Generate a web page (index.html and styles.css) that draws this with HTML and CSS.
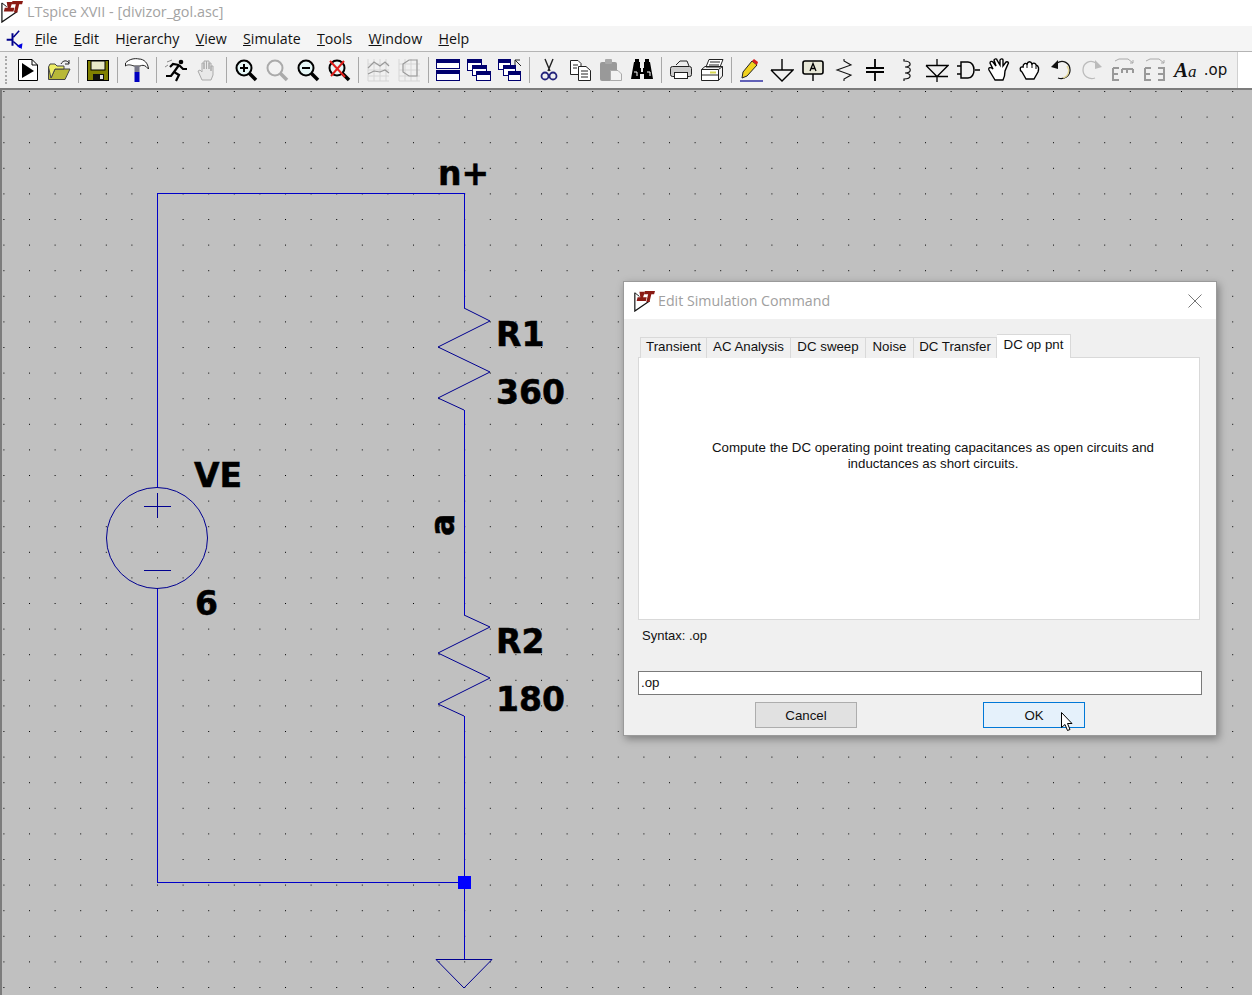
FILE: index.html
```html
<!DOCTYPE html>
<html lang="en">
<head>
    <meta charset="UTF-8">
    <title>LTspice XVII - [divizor_gol.asc]</title>
    <link rel="stylesheet" href="styles.css">
</head>
<body>

    <!-- app logo -->
    <svg width="0" height="0" class="defs">
        <symbol id="lt-logo" viewBox="0 0 24 24">
            <path d="M2 3 V23 L18 12" fill="none" stroke="#111" stroke-width="1.300"/>
            <path d="M2 3 L7 7" fill="none" stroke="#111"/>
            <path d="M7 2 H13 L11 8 H15 L14 12 H4 L5 8 H8 Z" fill="#8a1a14"/>
            <path d="M13 1 H24 L23 4.500 H20 L18 13 H14.500 L16.500 4.500 H12 Z" fill="#8a1a14"/>
        </symbol>
        <symbol id="glass" viewBox="0 0 24 24">
            <path d="M15 15 L22 22" stroke="#000" stroke-width="3.6" fill="none"/>
            <circle cx="10" cy="10" r="7.5" fill="#e6f7f7" stroke="#000" stroke-width="2"/>
        </symbol>
    </svg>

    <div class="titlebar">
        <svg class="title-logo"><use href="#lt-logo"/></svg>
        <span class="title-text">LTspice XVII - [divizor_gol.asc]</span>
    </div>

    <div class="menubar">
        <svg class="menu-icon" viewBox="0 0 24 24">
            <path d="M2 13 H9 M9 5 V20" stroke="#00008b" stroke-width="2.4" fill="none"/>
            <path d="M10 10 L17 2 M10 15 L18 22" stroke="#00008b" stroke-width="1.8" fill="none"/>
            <path d="M14 20 L21 17 L20 24 Z" fill="#0000e0"/>
        </svg>
        <nav class="menu">
            <span><u>F</u>ile</span>
            <span><u>E</u>dit</span>
            <span>H<u>i</u>erarchy</span>
            <span><u>V</u>iew</span>
            <span><u>S</u>imulate</span>
            <span><u>T</u>ools</span>
            <span><u>W</u>indow</span>
            <span><u>H</u>elp</span>
        </nav>
    </div>

    <div class="toolbar-row">
        <div class="toolbar">
            <span class="grip"></span>

            <svg class="ico" viewBox="0 0 24 24"><path d="M2.5 1.500 H16 L21.500 7 V22.500 H2.500 Z" fill="#fff" stroke="#000"/><path d="M16 1.500 V7 H21.500" fill="none" stroke="#000"/><path d="M6 5 L18 13 L6 20 Z" fill="#000"/></svg>
            <svg class="ico" viewBox="0 0 24 24"><path d="M1.500 9 V21.500 H18 L23 11 H8 L4 20" fill="#b8b838" stroke="#444"/><path d="M1.500 9 L3 6 H8 L10 8 H17 V11 H8 L4 20 Z" fill="#eeee66" stroke="#444"/><path d="M14 6 C16 2 20 2 22 5 M22 2 V6 H18" fill="none" stroke="#222"/></svg>
            <span class="sep"></span>
            <svg class="ico" viewBox="0 0 24 24"><rect x="1.500" y="2.500" width="21" height="20" fill="#808000" stroke="#000"/><rect x="5" y="3" width="14" height="9" fill="#e8e8c8" stroke="#000"/><rect x="7" y="16" width="11" height="6" fill="#111"/><rect x="14" y="17" width="3" height="4" fill="#ddd"/></svg>
            <span class="sep"></span>
            <svg class="ico" viewBox="0 0 24 24"><path d="M0.500 5 C4 1 10 0 14 1 C19 1 23 5 23.500 11 L21 8.500 C19 7 17 7 15 8 H9 C6 7 3 6 0.500 8 Z" fill="#fff" stroke="#222"/><rect x="9.500" y="8" width="5" height="6" fill="#777788"/><rect x="9.500" y="14" width="5" height="10" fill="#0000c0"/></svg>
            <span class="sep"></span>
            <svg class="ico" viewBox="0 0 24 24"><circle cx="17" cy="4" r="2.300"/><path d="M15 7 L10 14 L15 17 L12 23 M10 14 L7 18 H2 M15 7 L19 11 H23 M15 7 L9 6 L6 9" fill="none" stroke="#000" stroke-width="2.200"/><path d="M3 4 L8 2 M1 9 L4 7" stroke="#888" fill="none"/></svg>
            <svg class="ico" viewBox="0 0 24 24"><path d="M7 22 L3 13 L5 12 L7 14 V5 H9 V11 V3 H11.500 V11 V3 H14 V11 V5 H16 V13 V8 H18 V17 L16 22 Z" fill="#e8e8e8" stroke="#aaa"/></svg>
            <span class="sep"></span>
            <svg class="ico" viewBox="0 0 24 24"><use href="#glass"/><path d="M6 10 H14 M10 6 V14" stroke="#000" stroke-width="2"/></svg>
            <svg class="ico" viewBox="0 0 24 24"><path d="M15 15 L22 22" stroke="#aaa" stroke-width="3.600" fill="none"/><circle cx="10" cy="10" r="7.500" fill="#f2f2f2" stroke="#aaa" stroke-width="2"/></svg>
            <svg class="ico" viewBox="0 0 24 24"><use href="#glass"/><path d="M6 10 H14" stroke="#000" stroke-width="2"/></svg>
            <svg class="ico" viewBox="0 0 24 24"><use href="#glass"/><path d="M3 3 L18 19 M17 3 L4 18" stroke="#e0201c" stroke-width="2" fill="none"/></svg>
            <span class="sep"></span>
            <svg class="ico" viewBox="0 0 24 24"><path d="M2 1 V23 H23 M2 6 H23 M2 12 H23 M2 18 H23 M8 1 V23 M14 1 V23 M20 1 V23" stroke="#d6d6d6" fill="none"/><path d="M2 10 L8 4 L14 8 L19 4 L23 8 M2 16 L8 13 L14 14 L19 12 L23 15" stroke="#999" stroke-width="1.200" fill="none"/></svg>
            <svg class="ico" viewBox="0 0 24 24"><path d="M2 1 V23 H23 M2 6 H23 M2 12 H23 M2 18 H23 M8 1 V23 M14 1 V23 M20 1 V23" stroke="#d6d6d6" fill="none"/><path d="M6 6 L12 2 H20 V18 H12 L6 14 Z" stroke="#999" stroke-width="1.200" fill="none"/></svg>
            <span class="sep"></span>
            <svg class="ico" viewBox="0 0 24 24"><rect x="0.500" y="1.500" width="23" height="9" fill="#fff" stroke="#00006e"/><rect x="1" y="2" width="22" height="3" fill="#00006e"/><rect x="0.500" y="12.500" width="23" height="10" fill="#fff" stroke="#00006e"/><rect x="1" y="13" width="22" height="3" fill="#00006e"/></svg>
            <svg class="ico" viewBox="0 0 24 24"><rect x="0.500" y="1.500" width="14" height="11" fill="#fff" stroke="#00006e"/><rect x="1" y="2" width="13" height="3" fill="#00006e"/><rect x="5.500" y="7.500" width="14" height="10" fill="#fff" stroke="#00006e"/><rect x="6" y="8" width="13" height="3" fill="#00006e"/><rect x="9.500" y="13.500" width="14" height="9" fill="#fff" stroke="#00006e"/><rect x="10" y="14" width="13" height="3" fill="#00006e"/></svg>
            <svg class="ico" viewBox="0 0 24 24"><rect x="0.500" y="1.500" width="12" height="10" fill="#fff" stroke="#00006e"/><rect x="1" y="2" width="11" height="3" fill="#00006e"/><rect x="5.500" y="7.500" width="12" height="10" fill="#fff" stroke="#00006e"/><rect x="6" y="8" width="11" height="3" fill="#00006e"/><rect x="10.500" y="13.500" width="12" height="9" fill="#fff" stroke="#00006e"/><rect x="11" y="14" width="11" height="3" fill="#00006e"/><path d="M17 2 H22 M17 2 V7 M17 2 L23 8" stroke="#222" fill="none"/></svg>
            <span class="sep"></span>
            <svg class="ico" viewBox="0 0 24 24"><path d="M8 1 L13 13 M16 1 L11 13" stroke="#222" stroke-width="1.400" fill="none"/><circle cx="8" cy="18" r="3.500" fill="none" stroke="#22227a" stroke-width="1.800"/><circle cx="16" cy="18" r="3.500" fill="none" stroke="#22227a" stroke-width="1.800"/></svg>
            <svg class="ico" viewBox="0 0 24 24"><path d="M2.500 2.500 H10 L13 5.500 V16.500 H2.500 Z" fill="#fff" stroke="#222"/><path d="M10.500 8.500 H18 L22.500 12.500 V22.500 H10.500 Z" fill="#fff" stroke="#222"/><path d="M5 7 H10 M5 10 H9 M13 13 H20 M13 16 H20 M13 19 H20" stroke="#222"/></svg>
            <svg class="ico" viewBox="0 0 24 24"><rect x="1" y="4" width="17" height="19" rx="2" fill="#999"/><rect x="6" y="1" width="7" height="5" rx="1" fill="#aaa"/><path d="M11.500 12.500 H19 L22.500 16 V22.500 H11.500 Z" fill="#f2f2f2" stroke="#aaa"/></svg>
            <svg class="ico" viewBox="0 0 24 24"><path d="M4 4 H10 V10 H11 V14 H13 V10 H14 V4 H20 L23 21 H14 V16 H10 V21 H1 Z" fill="#000"/><path d="M5 1 H9 V4 H5 Z M15 1 H19 V4 H15 Z" fill="#000"/><path d="M4 14 H7 V18 M17 14 H20 V18" stroke="#fff" fill="none"/></svg>
            <span class="sep"></span>
            <svg class="ico" viewBox="0 0 24 24"><path d="M7 7 L11 3 H18 L20 8" fill="#eee" stroke="#222"/><rect x="1.500" y="8.500" width="21" height="10" rx="2" fill="#ccc" stroke="#222"/><rect x="5.500" y="14.500" width="13" height="6" fill="#fff" stroke="#222"/></svg>
            <svg class="ico" viewBox="0 0 24 24"><path d="M6 9 L9 1.500 H23 L20 9 Z" fill="#fff" stroke="#222"/><path d="M10 4 H20 M9 7 H19" stroke="#222"/><path d="M1.500 11.500 H18.500 V22.500 H1.500 Z" fill="#fff" stroke="#222"/><path d="M1.500 11.500 L5 8.500 H22.500 L18.500 11.500 M22.500 8.500 V18 L18.500 22.500 M1.500 17 H18.500" fill="none" stroke="#222"/><path d="M10 14.500 H16" stroke="#d8d850" stroke-width="2"/></svg>
            <span class="sep"></span>
            <svg class="ico" viewBox="0 0 24 24"><path d="M1 23 H24" stroke="#000090" stroke-width="1.200"/><path d="M3 20 L4 14 L13 3 L18 7 L8 18 Z" fill="#f2d21e" stroke="#222"/><path d="M13 3 L15 1 L19 4 L18 7 Z" fill="#d81c1c"/></svg>
            <svg class="ico" viewBox="0 0 24 24"><path d="M12 1 V12 M1 12 H23 L12 23 L1 12" fill="none" stroke="#000" stroke-width="1.400"/></svg>
            <svg class="ico" viewBox="0 0 24 24"><rect x="2" y="3" width="20" height="13" rx="2" fill="#e8e8d8" stroke="#000" stroke-width="1.600"/><path d="M12 16 V23" stroke="#000" stroke-width="1.400"/><path d="M9 13 L12 5.500 L15 13 M10 10.500 H14" fill="none" stroke="#000" stroke-width="1.300"/></svg>
            <svg class="ico" viewBox="0 0 24 24"><path d="M12 1 V3 L19 7 L5 12 L19 17 L12 21 V23" fill="none" stroke="#111" stroke-width="1.100"/></svg>
            <svg class="ico" viewBox="0 0 24 24"><path d="M12 1 V10 M12 14 V23 M3 10 H21 M3 14 H21" stroke="#000" stroke-width="1.800" fill="none"/></svg>
            <svg class="ico" viewBox="0 0 24 24"><path d="M10 1 V3 C18 3 18 9 11 9 C18 9 18 15 11 15 C18 15 18 21 10 21 V23" fill="none" stroke="#111" stroke-width="1.200"/></svg>
            <svg class="ico" viewBox="0 0 24 24"><path d="M12 1 V8 M1 7.500 H23 L12 18.500 L1 7.500 M1 18.500 H23 M12 18.500 V24" fill="none" stroke="#000" stroke-width="1.300"/></svg>
            <svg class="ico" viewBox="0 0 24 24"><path d="M1 8 H5 M1 16 H5 M19 12 H24" stroke="#000" stroke-width="1.400"/><path d="M5 4 H12 C20 4 20 20 12 20 H5 Z" fill="none" stroke="#000" stroke-width="1.500"/></svg>
            <svg class="ico" viewBox="0 0 24 24"><path d="M8 22 L2 12 C1 9 4 9 6 11 L3 5 C3 3 5 3 6 4 L9 8 L7 2 C8 0 10 1 10 2 L13 7 L13 2 C14 0 16 1 16 2 V8 L19 4 C21 3 22 5 21 6 L18 13 C18 18 17 20 16 22 Z" fill="#fff" stroke="#000" stroke-width="1.400"/></svg>
            <svg class="ico" viewBox="0 0 24 24"><path d="M8 21 L4 14 C1 12 2 8 5 9 C5 5 8 5 9 6 C10 3 13 3 14 6 C16 4 18 6 18 7 C21 8 21 11 20 14 L16 21 Z" fill="#fff" stroke="#000" stroke-width="1.400"/><path d="M9 6 V10 M14 6 V10 M18 8 V11" stroke="#000"/></svg>
            <svg class="ico" viewBox="0 0 24 24"><path d="M8 5 C14 1 21 5 21 12 C21 18 15 22 9 20" fill="none" stroke="#111" stroke-width="1.300"/><path d="M18 8 C21 12 20 18 14 20" fill="none" stroke="#e4d89a" stroke-width="1.300"/><path d="M2 9 L9 2 V11 Z" fill="#111"/></svg>
            <svg class="ico" viewBox="0 0 24 24"><path d="M16 5 C10 1 3 5 3 12 C3 18 9 22 15 20" fill="none" stroke="#bbb" stroke-width="1.300"/><path d="M22 9 L15 2 V11 Z" fill="#bbb"/></svg>
            <svg class="ico" viewBox="0 0 24 24"><path d="M4 3 L8 1 H17 L22 5 M22 2 V5 H19" fill="none" stroke="#aaa"/><path d="M2 10 H8 M2 10 V22 H8 M2 16 H7 M11 11 H22 M11 11 V15 M16 11 V15 M22 11 V15" stroke="#999" stroke-width="2" fill="none"/></svg>
            <svg class="ico" viewBox="0 0 24 24"><path d="M4 3 L8 1 H17 L22 5 M22 2 V5 H19" fill="none" stroke="#aaa"/><path d="M3 10 H9 M3 10 V22 H9 M3 16 H8 M16 10 H22 V22 H16 M16 16 H21" stroke="#999" stroke-width="2" fill="none"/></svg>
            <span class="ico ico-font">A<i>a</i></span>
            <span class="ico ico-op">.op</span>
        </div>
    </div>

    <main class="canvas">
        <svg class="schematic" width="1252" height="905" viewBox="0 90 1252 905">
            <defs>
                <pattern id="grid" x="3.400" y="91" width="25.6" height="25.6" patternUnits="userSpaceOnUse">
                    <rect width="1" height="1" fill="#000"/>
                </pattern>
            </defs>
            <rect x="0" y="90" width="1252" height="905" fill="url(#grid)"/>

            <!-- wires -->
            <path class="wire" d="M157.500 487 V193.500 H464.500 V308 M464.500 410 V615 M464.500 716 V959 M464.500 882.500 H157.500 V588"/>
            <rect x="458" y="876" width="13" height="13" fill="#0000ff"/>

            <!-- voltage source -->
            <circle class="part" cx="157" cy="538" r="50.500"/>
            <path class="part" d="M144 506.500 H171 M157.500 493 V518 M144 570.500 H171"/>

            <!-- resistors -->
            <path class="part" d="M464 308 L490 321 L438 347 L490 372 L438 398 L464 410"/>
            <path class="part" d="M464 615 L490 627 L438 653 L490 678 L438 704 L464 716"/>

            <!-- ground -->
            <path class="part" d="M436 959.500 H492 L464 988 Z"/>

            <!-- labels -->
            <text class="label" x="438" y="184.500">n+</text>
            <text class="label" x="496" y="346">R1</text>
            <text class="label" x="496" y="404">360</text>
            <text class="label" x="194" y="487">VE</text>
            <text class="label" x="195" y="615">6</text>
            <text class="label" x="496" y="653">R2</text>
            <text class="label" x="496" y="711">180</text>
            <text class="label" transform="translate(454 536) rotate(-90)">a</text>
        </svg>
    </main>

    <!-- Edit Simulation Command -->
    <div class="dialog">
        <div class="dialog-title">
            <svg class="dialog-logo"><use href="#lt-logo"/></svg>
            <span class="dialog-name">Edit Simulation Command</span>
            <svg class="dialog-close" viewBox="0 0 14 14"><path d="M0.500 0.500 L13.500 13.500 M13.500 0.500 L0.500 13.500" stroke="#777" fill="none"/></svg>
        </div>
        <div class="dialog-body">
            <div class="tabs">
                <span class="tab tab-a">Transient</span>
                <span class="tab tab-b">AC Analysis</span>
                <span class="tab tab-c">DC sweep</span>
                <span class="tab tab-d">Noise</span>
                <span class="tab tab-e">DC Transfer</span>
                <span class="tab tab-on">DC op pnt</span>
            </div>
            <div class="tab-panel">
                <p>Compute the DC operating point treating capacitances as open circuits and inductances as short circuits.</p>
            </div>
            <div class="syntax">Syntax: .op</div>
            <div class="cmd-input">.op</div>
            <div class="buttons">
                <button class="btn">Cancel</button>
                <button class="btn btn-ok">OK
                    <svg class="cursor" width="13" height="20" viewBox="0 0 13 20"><path d="M0.500 0.500 V15.500 L4 12.500 L6.500 18.500 L9 17.500 L6.500 11.500 H11 Z" fill="#fff" stroke="#000"/></svg>
                </button>
            </div>
        </div>
    </div>

</body>
</html>
```

FILE: styles.css
```css
* {
    box-sizing: border-box;
}

html, body {
    margin: 0;
    padding: 0;
    height: 995px;
    overflow: hidden;
}

body {
    display: flex;
    flex-direction: column;
    position: relative;
    background-color: #c0c0c0;
    font-family: "Liberation Sans", Arial, sans-serif;
}

.defs {
    position: absolute;
}

/* title bar */
.titlebar {
    height: 26px;
    padding-bottom: 3px;
    background-color: #fff;
    display: flex;
    align-items: center;
    flex: none;
}

.title-logo {
    width: 23px;
    height: 23px;
    margin-right: 4px;
}

.title-text {
    font-family: "Open Sans", sans-serif;
    font-size: 14.4px;
    color: #a3a3a3;
}

/* menu */
.menubar {
    height: 26px;
    flex: none;
    display: flex;
    align-items: center;
    background-color: #f5f5f5;
    border-bottom: 1px solid #b4b4b4;
    padding-left: 5px;
}

.menu-icon {
    width: 20px;
    height: 22px;
}

.menu {
    display: flex;
    gap: 16.3px;
    margin-left: 10px;
    font-family: "Open Sans", sans-serif;
    font-size: 14.2px;
    color: #111;
}

/* toolbar */
.toolbar-row {
    height: 38px;
    flex: none;
    background-color: #fff;
    border-bottom: 2px solid #7c7c7c;
}

.toolbar {
    width: 1238px;
    height: 36px;
    display: flex;
    align-items: center;
    padding-left: 5px;
    background-color: #f0f0f0;
    border-right: 1px solid #d0d0d0;
}

.grip {
    width: 7px;
    height: 28px;
    border-left: 2px dotted #aaa;
}

.ico {
    width: 24px;
    height: 24px;
    margin: 0 3.5px;
    flex: none;
}

.sep {
    width: 1px;
    height: 26px;
    margin: 0 3.5px;
    background-color: #a8a8a8;
    flex: none;
}

.ico-font {
    font-family: "Liberation Serif", serif;
    font-weight: bold;
    font-style: italic;
    font-size: 21px;
    line-height: 24px;
    color: #111;
    white-space: nowrap;
    text-align: right;
}

.ico-font i {
    font-size: 17px;
    font-weight: normal;
}

.ico-op {
    font-family: "DejaVu Sans", sans-serif;
    font-size: 15px;
    line-height: 24px;
    color: #111;
    text-align: center;
}

/* schematic */
.canvas {
    flex: 1;
    background-color: #c0c0c0;
    border-left: 2px solid #7c7c7c;
    overflow: hidden;
}

.schematic {
    display: block;
    margin-left: -2px;
}

.wire {
    fill: none;
    stroke: #0000c8;
    stroke-width: 1;
    shape-rendering: crispEdges;
}

.part {
    fill: none;
    stroke: #000090;
    stroke-width: 1;
}

.label {
    font-family: "DejaVu Sans", sans-serif;
    font-weight: bold;
    font-size: 33px;
    fill: #000;
    stroke: #000;
    stroke-width: 0.5px;
}

/* dialog */
.dialog {
    position: absolute;
    left: 623px;
    top: 281px;
    width: 594px;
    height: 455px;
    display: flex;
    flex-direction: column;
    background-color: #f0f0f0;
    border: 1px solid #9a9a9a;
    box-shadow: 2px 3px 8px rgba(0, 0, 0, 0.35);
}

.dialog-title {
    height: 37px;
    flex: none;
    display: flex;
    align-items: center;
    background-color: #fff;
    padding-left: 9px;
    padding-right: 14px;
}

.dialog-logo {
    width: 22px;
    height: 22px;
    margin-right: 3px;
}

.dialog-name {
    font-family: "Open Sans", sans-serif;
    font-size: 14.2px;
    color: #a0a0a0;
    flex: 1;
}

.dialog-close {
    width: 14px;
    height: 14px;
}

.dialog-body {
    flex: 1;
    display: flex;
    flex-direction: column;
    padding: 14px 14px 0 14px;
    font-size: 13.3px;
    color: #111;
}

.tabs {
    display: flex;
    align-items: flex-end;
    height: 24px;
    margin-left: 2px;
    position: relative;
    top: 1px;
}

.tab {
    height: 21px;
    line-height: 18px;
    text-align: center;
    background-color: #f0f0f0;
    border: 1px solid #d9d9d9;
    border-bottom: none;
    border-left: none;
}

.tab:first-child {
    border-left: 1px solid #d9d9d9;
}

.tab-a { width: 67px; }
.tab-b { width: 84px; }
.tab-c { width: 75px; }
.tab-d { width: 48px; }
.tab-e { width: 83px; }

.tab-on {
    width: 74px;
    height: 24px;
    line-height: 19px;
    background-color: #fff;
}

.tab-panel {
    width: 562px;
    height: 263px;
    flex: none;
    background-color: #fff;
    border: 1px solid #d9d9d9;
    padding-top: 82px;
    padding-left: 28px;
}

.tab-panel p {
    width: 470px;
    margin: 0 auto;
    line-height: 16px;
    text-align: center;
}

.syntax {
    height: 51px;
    flex: none;
    padding-left: 4px;
    padding-top: 8px;
    font-size: 13px;
}

.cmd-input {
    width: 564px;
    height: 24px;
    flex: none;
    background-color: #fff;
    border: 1px solid #7a7a7a;
    line-height: 22px;
    padding-left: 2px;
}

.buttons {
    display: flex;
    gap: 126px;
    margin-top: 7px;
    padding-left: 117px;
}

.btn {
    width: 102px;
    height: 26px;
    padding: 0;
    font-family: "Liberation Sans", Arial, sans-serif;
    font-size: 13.3px;
    color: #111;
    background-color: #e1e1e1;
    border: 1px solid #adadad;
    position: relative;
}

.btn-ok {
    background-color: #e5f1fb;
    border-color: #0078d7;
}

.cursor {
    position: absolute;
    left: 77px;
    top: 9px;
}
```
